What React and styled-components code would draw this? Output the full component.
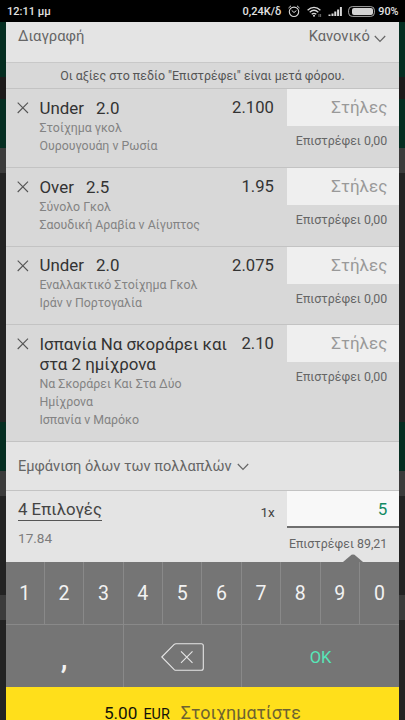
import styled, { createGlobalStyle } from 'styled-components'

const GlobalStyle = createGlobalStyle`
  * {
    box-sizing: border-box;
  }

  body {
    margin: 0;
    overflow: hidden;
    background: #232323;
    font-family: Roboto, "Liberation Sans", sans-serif;
  }
`

const Screen = styled.div`
  width: 405px;
  height: 720px;
  display: flex;
  flex-direction: column;
  overflow: hidden;
`

const StatusBar = styled.header`
  flex: none;
  height: 22px;
  padding: 1px 6.5px 0 7px;
  display: flex;
  align-items: center;
  justify-content: space-between;
  background: #000;
  color: #e2e2e2;
  font-size: 11px;
  font-weight: 500;
  line-height: 20px;
  white-space: nowrap;
`

const StatusRight = styled.div`
  display: flex;
  align-items: center;
`

const StatusIcon = styled.svg`
  display: block;
  flex: none;
  margin-left: ${props => props.$gap}px;
`

const Percent = styled.span`
  margin-left: 3px;
  font-size: 10.8px;
`

/* dimmed page behind the bet slip, seen at both edges */
const Backdrop = styled.main`
  flex: 1;
  min-height: 0;
  padding: 0 5px 0 5.5px;
  background: linear-gradient(
    #052d21 0 55px, #1c1a1a 55px 77px, #052d21 77px 126px, #3b3b3b 126px 151px,
    #232323 151px 400px, #052d21 400px 449px, #3b3b3b 449px 474px,
    #232323 474px 573px, #3b3b3b 573px 598px, #232323 598px
  );
`

const Slip = styled.div`
  width: 393.8px;
  height: 100%;
  display: flex;
  flex-direction: column;
  background: #e4e4e4;
  color: #666;
`

const SlipHeader = styled.div`
  flex: none;
  height: 40px;
  padding: 4px 13.5px 0 12.5px;
  display: flex;
  justify-content: space-between;
  font-size: 14.8px;
  line-height: 21px;
`

const Sort = styled.span`
  display: flex;
  gap: 4px;
  font-size: 14.7px;
`

const Chevron = styled.svg`
  display: block;
  margin-top: ${props => props.$top}px;
`

const Notice = styled.div`
  flex: none;
  height: 26px;
  border-top: 1px solid #c8c8c8;
  background: #d8d8d8;
  text-align: center;
  font-size: 12.4px;
  line-height: 26px;
  color: #555;
`

const Selection = styled.section`
  flex: none;
  height: ${props => props.$height}px;
  border-top: 1px solid #c3c3c3;
  background: #d8d8d8;
  display: grid;
  grid-template-columns: 34px 1fr auto 112.5px;
`

const RemoveIcon = styled.svg`
  display: block;
  margin: 13px 0 0 11px;
`

const Details = styled.div`
  padding-top: 8.6px;
  white-space: nowrap;
`

const Title = styled.div`
  white-space: pre-line;
  font-size: 16.9px;
  line-height: 20px;
  color: #333;
`

const Handicap = styled.span`
  margin-left: 12px;
`

const Market = styled.div`
  margin-top: 1px;
  white-space: pre-line;
  font-size: 12.35px;
  line-height: 18px;
  color: #838383;
`

const Odds = styled.div`
  padding: 9px 13px 0 0;
  font-size: 16.6px;
  line-height: 20.5px;
  color: #333;
`

const StakeInput = styled.div`
  height: 37px;
  padding-right: 12px;
  background: #efefef;
  text-align: right;
  font-size: 17px;
  line-height: 36px;
  color: #999;
`

const Returns = styled.div`
  padding: ${props => props.$top || 5}px 12px 0 0;
  text-align: right;
  white-space: nowrap;
  font-size: 12.4px;
  line-height: 20px;
  color: #666;
`

const ShowMultiples = styled.div`
  flex: none;
  height: 48.3px;
  padding: 14px 0 0 12.5px;
  border-top: 1px solid #c3c3c3;
  display: flex;
  gap: 5px;
  font-size: 14.6px;
  line-height: 21px;
`

const Multiple = styled.section`
  flex: none;
  height: 72.6px;
  border-top: 1px solid #c3c3c3;
  display: grid;
  grid-template-columns: 1fr auto 112.5px;
`

const MultipleInfo = styled.div`
  padding: 8px 0 0 12.5px;
`

const MultipleName = styled.div`
  width: max-content;
  height: 22px;
  border-bottom: 1px solid #555;
  font-size: 16.8px;
  line-height: 21px;
  color: #444;
`

const MultipleOdds = styled.div`
  margin-top: 7px;
  font-size: 13.6px;
  line-height: 20px;
  color: #7c7c7c;
`

const Count = styled.div`
  padding: 11px 12px 0 0;
  font-size: 13.6px;
  line-height: 20px;
  color: #444;
`

const ActiveStake = styled(StakeInput)`
  border-bottom: 2px solid #6f6f6f;
  background: #f8f8f8;
  color: #128a63;
`

const ReturnsBox = styled.div`
  position: relative;
`

const Pointer = styled.svg`
  position: absolute;
  left: 56px;
  bottom: 0;
`

const Keypad = styled.div`
  flex: none;
  height: 124.5px;
  background: #757575;
  color: #f2f2f2;
`

const KeyRow = styled.div`
  height: ${props => props.$height}px;
  display: grid;
  grid-template-columns: ${props => props.$columns};

  & + & {
    border-top: 1px solid #898989;
  }
`

const Key = styled.div`
  padding-top: ${props => props.$drop || 0}px;
  display: flex;
  align-items: center;
  justify-content: center;
  font-size: ${props => props.$size || 19.5}px;
  color: ${props => props.$color || 'inherit'};

  &:not(:last-child) {
    border-right: 1px solid #898989;
  }
`

const Comma = styled.span`
  font-size: 30px;
  font-weight: 500;
  line-height: 30px;
`

const PlaceBet = styled.div`
  flex: 1;
  min-height: 0;
  padding-top: 16px;
  display: flex;
  justify-content: center;
  align-items: baseline;
  background: #ffdf1b;
  color: #12120a;
  font-size: 17.2px;
  line-height: 20px;
`

const Currency = styled.span`
  margin-left: 6px;
  font-size: 14.4px;
`

const PlaceLabel = styled.span`
  margin-left: 11px;
  font-size: 17.9px;
  color: #6e6330;
`

const selections = [
  { title: 'Under', handicap: '2.0', odds: '2.100', market: 'Στοίχημα γκολ\nΟυρουγουάη ν Ρωσία', height: 79 },
  { title: 'Over', handicap: '2.5', odds: '1.95', market: 'Σύνολο Γκολ\nΣαουδική Αραβία ν Αίγυπτος', height: 78.5 },
  { title: 'Under', handicap: '2.0', odds: '2.075', market: 'Εναλλακτικό Στοίχημα Γκολ\nΙράν ν Πορτογαλία', height: 78.7 },
  { title: 'Ισπανία Να σκοράρει και\nστα 2 ημίχρονα', odds: '2.10', market: 'Να Σκοράρει Και Στα Δύο\nΗμίχρονα\nΙσπανία ν Μαρόκο', height: 117.2 },
]

const digits = ['1', '2', '3', '4', '5', '6', '7', '8', '9', '0']

function Down({ top }) {
  return (
    <Chevron $top={top} width="12" height="8" viewBox="0 0 12 8" fill="none" stroke="#666" strokeWidth="1.2">
      <path d="M0.8 1 6 6.4 11.2 1" />
    </Chevron>
  )
}

function StatusIcons() {
  return (
    <>
      <StatusIcon $gap={7} width="12" height="13" viewBox="0 0 12 13" fill="none" stroke="#d8d8d8">
        <circle cx="6" cy="6.8" r="4.7" strokeWidth="1.1" />
        <path d="M0.5 3 3 0.8M11.5 3 9 0.8M3.7 5.4 6 7.5 8.4 5.6" />
      </StatusIcon>
      <StatusIcon $gap={7} width="15" height="12" viewBox="0 0 15 12" fill="none" stroke="#d8d8d8" strokeWidth="1.3">
        <path d="M0.6 4.2C4.5 0.3 9.5 0.3 13.4 4.2M2.7 6.3C5.5 3.7 8.5 3.7 11.3 6.3M4.7 8.3C6.2 7 7.8 7 9.3 8.3" />
        <circle cx="7" cy="9.8" r="1" fill="#d8d8d8" stroke="none" />
        <path d="M12 8v3M13.6 8v3" stroke="#777" strokeWidth="0.9" />
      </StatusIcon>
      <StatusIcon $gap={6} width="15" height="11" viewBox="0 0 15 11" fill="#d8d8d8">
        <path d="M0.5 8.5h2V10h-2zM3.5 7.4h2V10h-2zM6.3 5.6h2V10h-2zM9.1 3.6h2V10h-2zM11.9 1h2v9h-2z" />
      </StatusIcon>
      <StatusIcon $gap={5} width="27" height="11" viewBox="0 0 27 11">
        <rect x="0.6" y="0.6" width="25.8" height="9.8" rx="3.6" fill="none" stroke="#a5a5a5" />
        <rect x="4" y="2" width="21" height="7" rx="2" fill="#d3d3d3" />
      </StatusIcon>
    </>
  )
}

function SelectionRow({ item }) {
  return (
    <Selection $height={item.height}>
      <RemoveIcon width="12" height="12" viewBox="0 0 12 12" stroke="#555" strokeWidth="1.1">
        <path d="M0.7 0.7 11 11M11 0.7 0.7 11" />
      </RemoveIcon>
      <Details>
        <Title>
          {item.title}
          {item.handicap && <Handicap>{item.handicap}</Handicap>}
        </Title>
        <Market>{item.market}</Market>
      </Details>
      <Odds>{item.odds}</Odds>
      <div>
        <StakeInput>Στήλες</StakeInput>
        <Returns>Επιστρέφει 0,00</Returns>
      </div>
    </Selection>
  )
}

function App() {
  return (
    <Screen>
      <GlobalStyle />
      <StatusBar>
        <span>12:11 μμ</span>
        <StatusRight>
          <span>0,24K/δ</span>
          <StatusIcons />
          <Percent>90%</Percent>
        </StatusRight>
      </StatusBar>
      <Backdrop>
        <Slip>
          <SlipHeader>
            <span>Διαγραφή</span>
            <Sort>
              Κανονικό
              <Down top={9} />
            </Sort>
          </SlipHeader>
          <Notice>Οι αξίες στο πεδίο "Επιστρέφει" είναι μετά φόρου.</Notice>
          {selections.map((item, i) => (
            <SelectionRow key={i} item={item} />
          ))}
          <ShowMultiples>
            Εμφάνιση όλων των πολλαπλών
            <Down top={7} />
          </ShowMultiples>
          <Multiple>
            <MultipleInfo>
              <MultipleName>4 Επιλογές</MultipleName>
              <MultipleOdds>17.84</MultipleOdds>
            </MultipleInfo>
            <Count>1x</Count>
            <ReturnsBox>
              <ActiveStake>5</ActiveStake>
              <Returns $top={6}>Επιστρέφει 89,21</Returns>
              <Pointer width="20" height="8" viewBox="0 0 20 8" fill="#757575">
                <path d="M0 8 8.5 0.8Q10 0 11.5 0.8L20 8z" />
              </Pointer>
            </ReturnsBox>
          </Multiple>
          <Keypad>
            <KeyRow $height={62} $columns="repeat(10, 1fr)">
              {digits.map(d => (
                <Key key={d}>{d}</Key>
              ))}
            </KeyRow>
            <KeyRow $height={62.5} $columns="3fr 3fr 4fr">
              <Key $drop={4}>
                <Comma>,</Comma>
              </Key>
              <Key $drop={1}>
                <svg width="43" height="28" viewBox="0 0 43 28" fill="none" stroke="#e6e6e6" strokeWidth="1.1">
                  <path d="M0.8 14 13.2 1.4Q14 0.7 15 0.7H40.3Q42.3 0.7 42.3 2.7V25.3Q42.3 27.3 40.3 27.3H15Q14 27.3 13.2 26.6Z" />
                  <path d="M20 8.3 31.5 19.8M31.5 8.3 20 19.8" />
                </svg>
              </Key>
              <Key $drop={2} $size={16.5} $color="#57e6b8">OK</Key>
            </KeyRow>
          </Keypad>
          <PlaceBet>
            5.00
            <Currency>EUR</Currency>
            <PlaceLabel>Στοιχηματίστε</PlaceLabel>
          </PlaceBet>
        </Slip>
      </Backdrop>
    </Screen>
  )
}

export default App
